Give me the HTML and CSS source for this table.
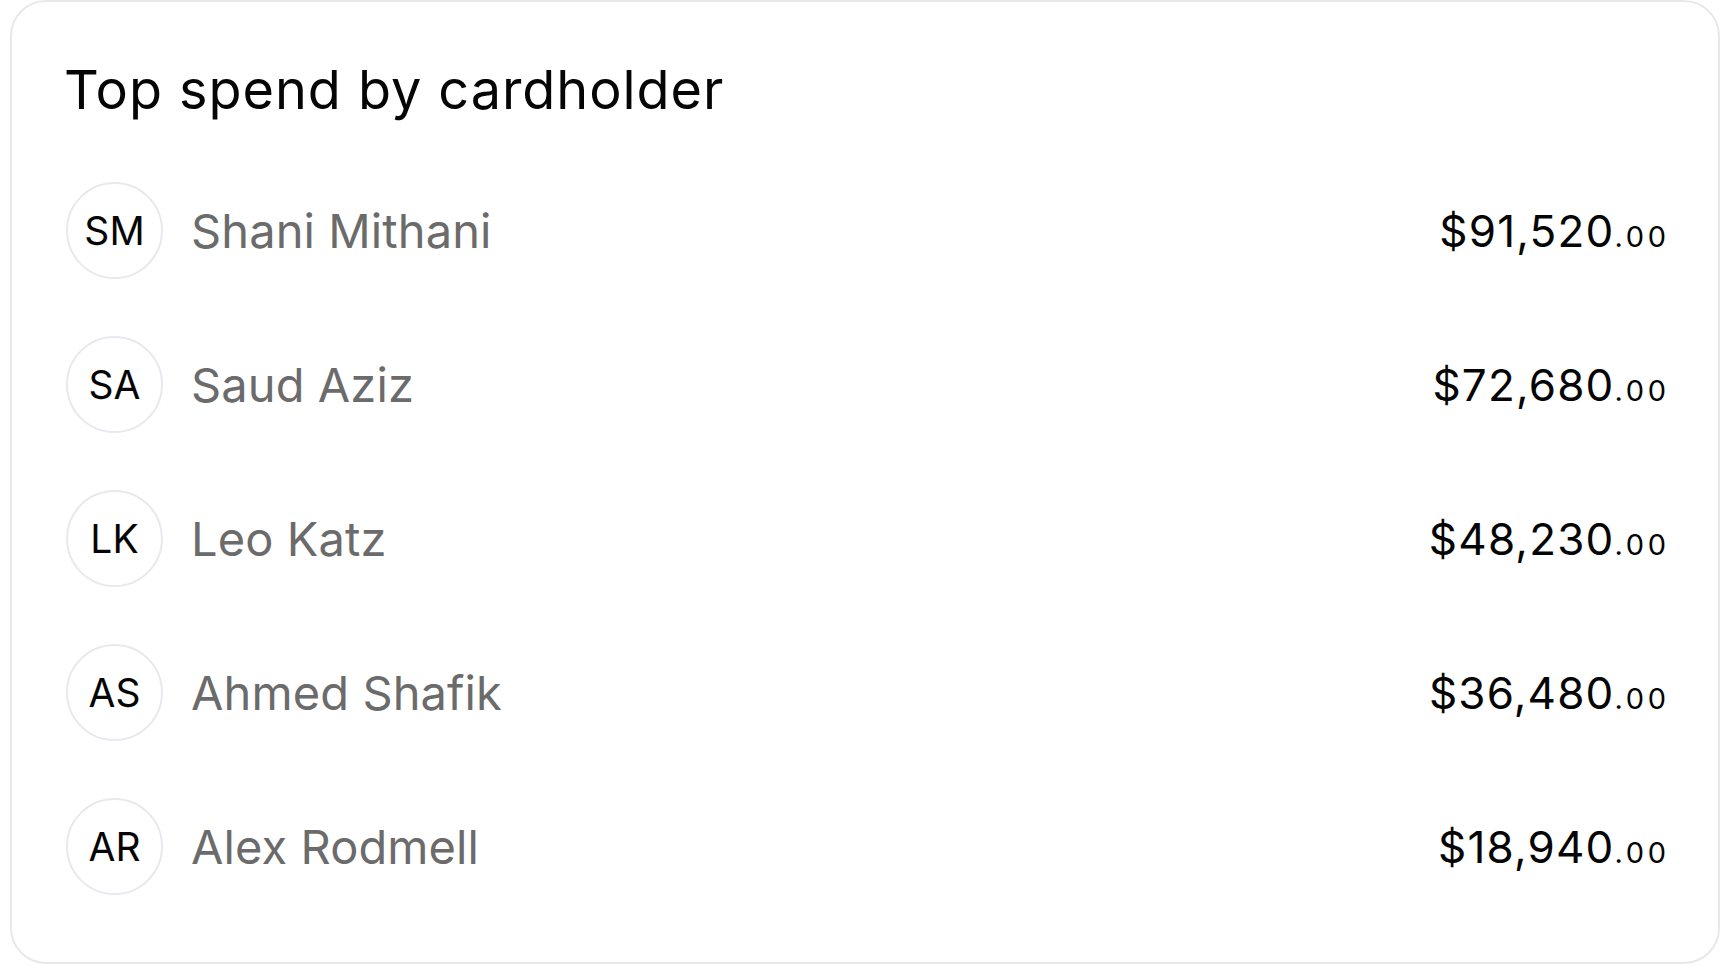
FILE: index.html
```html
<!DOCTYPE html>
<html lang="en">
<head>
<meta charset="utf-8">
<title>Top spend by cardholder</title>
<link rel="stylesheet" href="styles.css">
</head>
<body>
<section class="card">
  <h2 class="card-title">Top spend by cardholder</h2>
  <ul class="list">
    <li class="row">
      <span class="avatar">SM</span>
      <span class="name">Shani Mithani</span>
      <span class="amount">$91,520<span class="cents">.00</span></span>
    </li>
    <li class="row">
      <span class="avatar">SA</span>
      <span class="name">Saud Aziz</span>
      <span class="amount">$72,680<span class="cents">.00</span></span>
    </li>
    <li class="row">
      <span class="avatar">LK</span>
      <span class="name">Leo Katz</span>
      <span class="amount">$48,230<span class="cents">.00</span></span>
    </li>
    <li class="row">
      <span class="avatar">AS</span>
      <span class="name">Ahmed Shafik</span>
      <span class="amount">$36,480<span class="cents">.00</span></span>
    </li>
    <li class="row">
      <span class="avatar">AR</span>
      <span class="name">Alex Rodmell</span>
      <span class="amount">$18,940<span class="cents">.00</span></span>
    </li>
  </ul>
</section>
</body>
</html>
```

FILE: styles.css
```css
* {
  box-sizing: border-box;
}

html, body {
  margin: 0;
  background: #ffffff;
}

body {
  padding: 0 3px 0 10px;
  font-family: Inter, "Noto Sans", "Liberation Sans", sans-serif;
  color: #0a0a0a;
}

.card {
  border: 2px solid #e7e8ec;
  border-radius: 36px;
  background: #ffffff;
  padding: 56px 52px 66px 54px;
  height: 964px;
}

.card-title {
  margin: 0 0 0 -2px;
  font-size: 54px;
  line-height: 64px;
  font-weight: 400;
  letter-spacing: 0.95px;
  color: #050505;
}

.list {
  list-style: none;
  margin: 60px 0 0 0;
  padding: 0;
  display: flex;
  flex-direction: column;
  gap: 57px;
}

.row {
  display: flex;
  align-items: center;
  height: 97px;
}

.avatar {
  flex: 0 0 auto;
  width: 97px;
  height: 97px;
  border: 2px solid #e8e9ee;
  border-radius: 50%;
  display: flex;
  align-items: center;
  justify-content: center;
  font-size: 39px;
  font-weight: 400;
  color: #050505;
}

.name {
  flex: 1 1 auto;
  margin-left: 28px;
  font-size: 47px;
  color: #6b6b6b;
  letter-spacing: 0.1px;
}

.amount {
  flex: 0 0 auto;
  font-size: 44px;
  color: #050505;
  letter-spacing: 1.2px;
}

.cents {
  font-size: 29px;
  letter-spacing: 3.6px;
  margin-right: -3.6px;
}
```
